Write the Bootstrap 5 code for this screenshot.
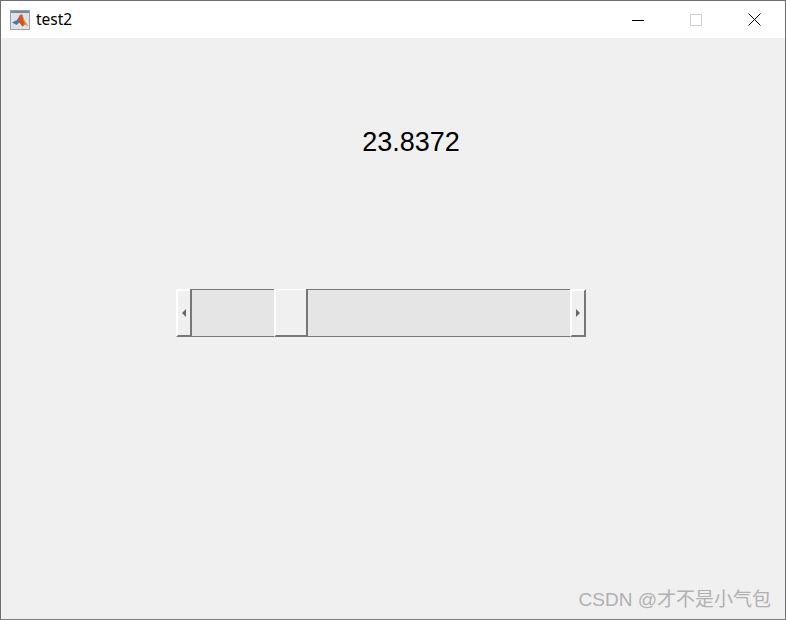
<!DOCTYPE html>
<html lang="en">
<head>
  <meta charset="UTF-8" />
  <title>test2</title>
  <link href="https://cdn.jsdelivr.net/npm/bootstrap@5.3.3/dist/css/bootstrap.min.css" rel="stylesheet">
  <style>
    html, body { height: 100%; margin: 0; background: #f0f0f0; }
    .app-window {
      position: relative;
      width: 786px;
      height: 620px;
      border: 1px solid #6e6e6e;
      border-bottom-color: #7a7a7a;
      background: #f0f0f0;
      font-family: "Liberation Sans", Arial, sans-serif;
      overflow: hidden;
    }
    .title-strip { height: 37px; background: #fff; padding-left: 9px; padding-right: 2px; flex: none; }
    .title-text { font-family: "Noto Sans", "Liberation Sans", sans-serif; font-size: 15.5px; margin-left: 6px; margin-bottom: 2px; color: #000; line-height: 20px; }
    .win-btn { width: 58px; height: 37px; }
    .figure-area { padding: 86px 0 0 175px; }
    .value-label { width: 470px; font-size: 27px; line-height: 36px; color: #000; text-align: center; }
    .slider-bar { width: 410px; height: 48px; margin-top: 129px; }
    .arrow-btn { height: 48px; background: #f0f0f0; }
    .arrow-left { width: 14px; border-top: 2px solid #fff; border-left: 2px solid #fff; border-bottom: 2px solid #777; }
    .arrow-right { width: 16px; border-top: 2px solid #fff; border-left: 2px solid #fff; border-right: 2px solid #777; border-bottom: 2px solid #777; }
    .track-part { height: 48px; background: #e5e5e5; border-top: 1px solid #777; border-bottom: 1px solid #777; }
    .track-a { width: 84px; border-left: 2px solid #777; }
    .track-b { flex: 1; border-left: 2px solid #777; }
    .thumb-part { width: 32px; height: 48px; background: #f0f0f0; border-left: 2px solid #fff; border-top: 1px solid #fff; border-bottom: 2px solid #777; }
    .tri-left { width: 0; height: 0; border-top: 4px solid transparent; border-bottom: 4px solid transparent; border-right: 4px solid #666; }
    .tri-right { width: 0; height: 0; border-top: 4px solid transparent; border-bottom: 4px solid transparent; border-left: 4px solid #666; }
    .mark-text {
      position: absolute;
      right: 14px;
      top: 587px;
      font-family: "Liberation Sans", "Noto Sans CJK SC", sans-serif;
      font-size: 19px;
      line-height: 24px;
      color: #b0b0b0;
      white-space: nowrap;
    }
  </style>
</head>
<body>
  <div class="app-window d-flex flex-column">
    <div class="title-strip d-flex align-items-center">
      <svg width="20" height="20" viewBox="0 0 20 20">
        <rect x="0.5" y="0.5" width="19" height="19" fill="#dfe3e8" stroke="#a0a0a0"/>
        <rect x="1" y="1" width="18" height="2" fill="#6f8aa6"/>
        <path d="M2 12.5 L7 10 L10 5 L12 4.5 L14.5 11 L18 16 L15 14 L12.5 16.5 L9.5 12.5 L6.5 15 Z" fill="#3f7fb5"/>
        <path d="M7.5 11 L10 5 L12 4.5 L14.5 11 L18 16 L15 14 L12.5 16.5 L9.5 12.5 Z" fill="#d9541e"/>
        <path d="M12 4.5 L14.5 11 L18 16 L15 14 L13 9 Z" fill="#f2a52e"/>
      </svg>
      <span class="title-text">test2</span>
      <div class="ms-auto d-flex">
        <div class="win-btn d-flex align-items-center justify-content-center">
          <svg width="12" height="12" viewBox="0 0 12 12"><path d="M0 6.5H12" stroke="#000" stroke-width="1"/></svg>
        </div>
        <div class="win-btn d-flex align-items-center justify-content-center">
          <svg width="12" height="12" viewBox="0 0 12 12"><rect x="0.5" y="0.5" width="11" height="11" fill="none" stroke="#ccc"/></svg>
        </div>
        <div class="win-btn d-flex align-items-center justify-content-center">
          <svg width="13" height="13" viewBox="0 0 13 13"><path d="M0.5 0.5L12.5 12.5M12.5 0.5L0.5 12.5" stroke="#000" stroke-width="1"/></svg>
        </div>
      </div>
    </div>
    <div class="figure-area flex-grow-1">
      <div class="value-label">23.8372</div>
      <div class="slider-bar d-flex">
        <div class="arrow-btn arrow-left d-flex align-items-center justify-content-center"><div class="tri-left"></div></div>
        <div class="track-part track-a"></div>
        <div class="thumb-part"></div>
        <div class="track-part track-b"></div>
        <div class="arrow-btn arrow-right d-flex align-items-center justify-content-center"><div class="tri-right"></div></div>
      </div>
    </div>
    <div class="mark-text">CSDN @才不是小气包</div>
  </div>
  <script src="https://cdn.jsdelivr.net/npm/bootstrap@5.3.3/dist/js/bootstrap.bundle.min.js"></script>
</body>
</html>
